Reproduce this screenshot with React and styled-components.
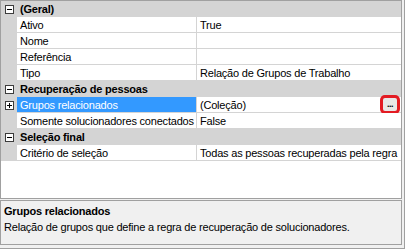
import React from 'react';
import styled, { createGlobalStyle } from 'styled-components';

const GlobalStyle = createGlobalStyle`
  html, body {
    margin: 0;
    padding: 0;
    background: #ffffff;
  }
  * {
    box-sizing: border-box;
  }
`;

const Frame = styled.div`
  width: 405px;
  height: 249px;
  display: flex;
  flex-direction: column;
  gap: 1px;
  padding: 0 2px 3px 0;
  background: #f0f0f0;
  border-right: 1px solid #a0a0a0;
  border-bottom: 1px solid #a0a0a0;
  font-family: "Liberation Sans", Arial, sans-serif;
  font-size: 11px;
  letter-spacing: -0.2px;
  color: #000;
`;

Frame.displayName = 'Frame';

const Grid = styled.div`
  height: 199px;
  background: #ffffff;
  border: 1px solid #a0a0a0;
  display: flex;
  flex-direction: column;
`;

Grid.displayName = 'Grid';

const CategoryRow = styled.div`
  height: 16px;
  display: flex;
  align-items: center;
  background: #d4d4d4;
  font-weight: bold;
`;

CategoryRow.displayName = 'CategoryRow';

const PropertyRow = styled.div`
  height: 16px;
  display: grid;
  grid-template-columns: 16px 180px 1fr;
  background: #d4d4d4;
`;

PropertyRow.displayName = 'PropertyRow';

const Gutter = styled.div`
  width: 16px;
  height: 100%;
  display: flex;
  align-items: center;
  justify-content: center;
  flex-shrink: 0;
`;

Gutter.displayName = 'Gutter';

const ToggleBox = styled.span`
  width: 9px;
  height: 9px;
  border: 1px solid #3c3c3c;
  background: #ffffff;
  position: relative;
  &::before {
    content: '';
    position: absolute;
    left: 1px;
    top: 3px;
    width: 5px;
    height: 1px;
    background: #000;
  }
  &::after {
    content: '';
    display: ${props => (props.$plus ? 'block' : 'none')};
    position: absolute;
    left: 3px;
    top: 1px;
    width: 1px;
    height: 5px;
    background: #000;
  }
`;

ToggleBox.displayName = 'ToggleBox';

const CategoryTitle = styled.span`
  padding-left: 3px;
  white-space: nowrap;
`;

CategoryTitle.displayName = 'CategoryTitle';

const LabelCell = styled.div`
  height: 16px;
  padding-left: 3px;
  display: flex;
  align-items: center;
  white-space: nowrap;
  overflow: hidden;
  background: ${props => (props.$selected ? '#3399ff' : '#ffffff')};
  color: ${props => (props.$selected ? '#ffffff' : '#000000')};
  border-right: 1px solid #d4d4d4;
  border-bottom: 1px solid #d4d4d4;
`;

LabelCell.displayName = 'LabelCell';

const ValueCell = styled.div`
  height: 16px;
  padding-left: 3px;
  padding-right: 4px;
  display: flex;
  align-items: center;
  justify-content: space-between;
  white-space: nowrap;
  overflow: visible;
  background: #ffffff;
  border-bottom: 1px solid #d4d4d4;
`;

ValueCell.displayName = 'ValueCell';

const EllipsisButton = styled.span`
  width: 14px;
  height: 13px;
  margin-top: -1px;
  display: flex;
  align-items: flex-end;
  justify-content: center;
  padding-bottom: 2px;
  background: #e8e8e8;
  border-radius: 2px;
  box-shadow: 0 0 0 3px #e31b23;
  font-size: 9px;
  font-weight: bold;
  line-height: 1;
  letter-spacing: -0.5px;
  color: #000;
`;

EllipsisButton.displayName = 'EllipsisButton';

const HelpPanel = styled.div`
  flex: 1;
  border: 1px solid #a0a0a0;
  background: #f0f0f0;
  padding: 4px 3px;
  display: flex;
  flex-direction: column;
  gap: 4px;
`;

HelpPanel.displayName = 'HelpPanel';

const HelpTitle = styled.div`
  font-weight: bold;
`;

HelpTitle.displayName = 'HelpTitle';

const HelpText = styled.div``;

HelpText.displayName = 'HelpText';

const sections = [
  {
    title: '(Geral)',
    rows: [
      { label: 'Ativo', value: 'True' },
      { label: 'Nome', value: '' },
      { label: 'Referência', value: '' },
      { label: 'Tipo', value: 'Relação de Grupos de Trabalho' }
    ]
  },
  {
    title: 'Recuperação de pessoas',
    rows: [
      { label: 'Grupos relacionados', value: '(Coleção)', selected: true, expandable: true, button: true },
      { label: 'Somente solucionadores conectados', value: 'False' }
    ]
  },
  {
    title: 'Seleção final',
    rows: [
      { label: 'Critério de seleção', value: 'Todas as pessoas recuperadas pela regra' }
    ]
  }
];

export default function App () {
  return (
    <>
      <GlobalStyle />
      <Frame>
        <Grid>
          {sections.map(section => (
            <React.Fragment key={section.title}>
              <CategoryRow>
                <Gutter><ToggleBox /></Gutter>
                <CategoryTitle>{section.title}</CategoryTitle>
              </CategoryRow>
              {section.rows.map(row => (
                <PropertyRow key={row.label}>
                  <Gutter>{row.expandable && <ToggleBox $plus />}</Gutter>
                  <LabelCell $selected={row.selected}>{row.label}</LabelCell>
                  <ValueCell>
                    <span>{row.value}</span>
                    {row.button && <EllipsisButton>...</EllipsisButton>}
                  </ValueCell>
                </PropertyRow>
              ))}
            </React.Fragment>
          ))}
        </Grid>
        <HelpPanel>
          <HelpTitle>Grupos relacionados</HelpTitle>
          <HelpText>Relação de grupos que define a regra de recuperação de solucionadores.</HelpText>
        </HelpPanel>
      </Frame>
    </>
  );
}
